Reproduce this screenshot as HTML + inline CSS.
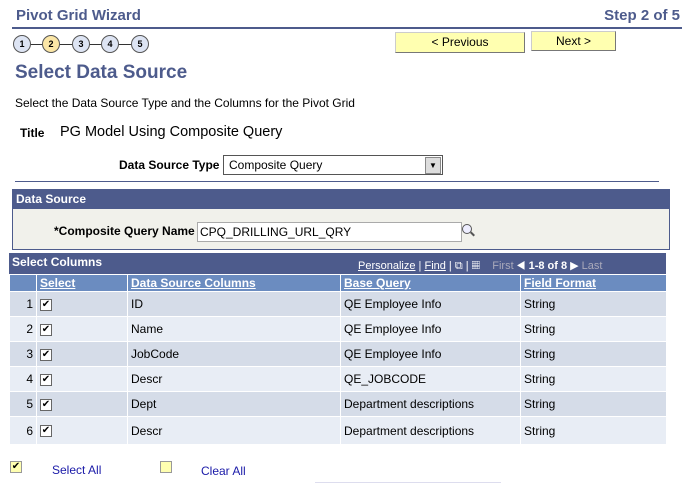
<!DOCTYPE html><html><head><style>
body{margin:0;width:682px;height:483px;background:#fff;font-family:"Liberation Sans",Arial,sans-serif;position:relative;overflow:hidden;color:#000}
.a{position:absolute}
.hd{font-weight:bold;color:#4d5b8c;font-size:15px}
.c{width:16px;height:16px;border:1px solid #555;border-radius:50%;background:#dde4f3;font-size:9px;font-weight:bold;text-align:center;line-height:16px}
.btn{background:#ffffb0;border:1px solid #ccc;border-right-color:#777;border-bottom-color:#777;font-size:12px;text-align:center;line-height:18px}
table{border-collapse:collapse;font-size:12px;table-layout:fixed}
td{border:1px solid #fff;height:24px;padding:0 0 0 3px;white-space:nowrap;overflow:hidden}
tr.h td{height:16px;line-height:14px}
.cb{display:inline-block;width:10px;height:10px;border:1px solid #666;background:#fff;font-size:10px;line-height:10px;text-align:center;vertical-align:middle}
a{color:#1a1aa8}
</style></head><body>
<div class="a hd" style="left:16px;top:7px">Pivot Grid Wizard</div>
<div class="a hd" style="right:2px;top:7px">Step 2 of 5</div>
<div class="a" style="left:12px;top:27px;width:670px;height:2px;background:#4d5b8c"></div>
<div class="a" style="left:20px;top:44px;width:116px;height:1px;background:#333"></div>
<div class="a c" style="left:13px;top:35px">1</div>
<div class="a c" style="left:42px;top:35px;background:#fbe6a6">2</div>
<div class="a c" style="left:72px;top:35px">3</div>
<div class="a c" style="left:101px;top:35px">4</div>
<div class="a c" style="left:131px;top:35px">5</div>
<div class="a btn" style="left:395px;top:32px;width:128px;height:19px">&lt; Previous</div>
<div class="a btn" style="left:531px;top:31px;width:83px;height:18px">Next &gt;</div>
<div class="a" style="left:15px;top:62px;font-size:19px;font-weight:bold;color:#4d5b8c">Select Data Source</div>
<div class="a" style="left:15px;top:96px;font-size:12px">Select the Data Source Type and the Columns for the Pivot Grid</div>
<div class="a" style="left:20px;top:126px;font-size:12px;font-weight:bold">Title</div>
<div class="a" style="left:60px;top:124px;font-size:14.5px">PG Model Using Composite Query</div>
<div class="a" style="left:119px;top:158px;font-size:12px;font-weight:bold">Data Source Type</div>
<div class="a" style="left:223px;top:155px;width:218px;height:18px;border:1px solid #555;font-size:12px;line-height:18px;text-indent:5px">Composite Query<div class="a" style="right:1px;top:1px;width:14px;height:15px;background:#ddd;border:1px solid #888;font-size:8px;line-height:15px;text-indent:0;text-align:center">▼</div></div>
<div class="a" style="left:15px;top:181px;width:644px;height:1px;background:#4d5b8c"></div>
<div class="a" style="left:12px;top:189px;width:656px;height:59px;border:1px solid #4d5b8c;background:#f1f1eb"></div>
<div class="a" style="left:13px;top:190px;width:656px;height:19px;background:#4d5b8c;color:#fff;font-size:12px;font-weight:bold;line-height:19px;text-indent:3px">Data Source</div>
<div class="a" style="left:54px;top:224px;font-size:12px;font-weight:bold">*Composite Query Name</div>
<div class="a" style="left:197px;top:222px;width:263px;height:18px;border:1px solid #aaa;background:#fff;font-size:12px;line-height:18px;text-indent:2px">CPQ_DRILLING_URL_QRY</div>
<div class="a" style="left:462px;top:224px;width:8px;height:8px;border:1.5px solid #555;border-radius:50%;background:#eef"></div>
<div class="a" style="left:470px;top:233px;width:5px;height:2px;background:#555;transform:rotate(45deg)"></div>
<div class="a" style="left:9px;top:253px;width:657px;height:21px;background:#4d5b8c;color:#fff;font-size:12px;font-weight:bold;line-height:19px;text-indent:3px">Select Columns</div>
<div class="a" style="left:358px;top:259px;font-size:11px;color:#fff"><u>Personalize</u> | <u>Find</u> | ⧉ | ▦ &nbsp;&nbsp;&nbsp;<span style="color:#aab">First</span> ◀ <b>1-8 of 8</b> ▶ <span style="color:#aab">Last</span></div>
<table class="a" style="left:9px;top:274px;width:658px;border:1px solid #4d5b8c">
<colgroup><col style="width:27px"><col style="width:91px"><col style="width:213px"><col style="width:180px"><col></colgroup>
<tr class="h" style="background:#6b8cc0;color:#fff;font-weight:bold"><td></td><td><u>Select</u></td><td><u>Data Source Columns</u></td><td><u>Base Query</u></td><td><u>Field Format</u></td></tr>
<tr style="background:#d5dce8"><td style="text-align:right;padding-right:3px">1</td><td><span class="cb">✔</span></td><td>ID</td><td>QE Employee Info</td><td>String</td></tr>
<tr style="background:#e8edf5"><td style="text-align:right;padding-right:3px">2</td><td><span class="cb">✔</span></td><td>Name</td><td>QE Employee Info</td><td>String</td></tr>
<tr style="background:#d5dce8"><td style="text-align:right;padding-right:3px">3</td><td><span class="cb">✔</span></td><td>JobCode</td><td>QE Employee Info</td><td>String</td></tr>
<tr style="background:#e8edf5"><td style="text-align:right;padding-right:3px">4</td><td><span class="cb">✔</span></td><td>Descr</td><td>QE_JOBCODE</td><td>String</td></tr>
<tr style="background:#d5dce8"><td style="text-align:right;padding-right:3px">5</td><td><span class="cb">✔</span></td><td>Dept</td><td>Department descriptions</td><td>String</td></tr>
<tr style="background:#e8edf5"><td style="text-align:right;padding-right:3px;height:27px">6</td><td><span class="cb">✔</span></td><td>Descr</td><td>Department descriptions</td><td>String</td></tr>
</table>
<div class="a" style="left:10px;top:461px;width:10px;height:10px;border:1px solid #999;background:#ffffb0;font-size:10px;line-height:10px;text-align:center">✔</div>
<div class="a" style="left:52px;top:463px;font-size:12px"><a>Select All</a></div>
<div class="a" style="left:160px;top:461px;width:10px;height:10px;border:1px solid #999;background:#ffffb0"></div>
<div class="a" style="left:201px;top:464px;font-size:12px"><a>Clear All</a></div>
<div class="a" style="left:315px;top:482px;width:186px;height:1px;background:#dde"></div>
</body></html>
